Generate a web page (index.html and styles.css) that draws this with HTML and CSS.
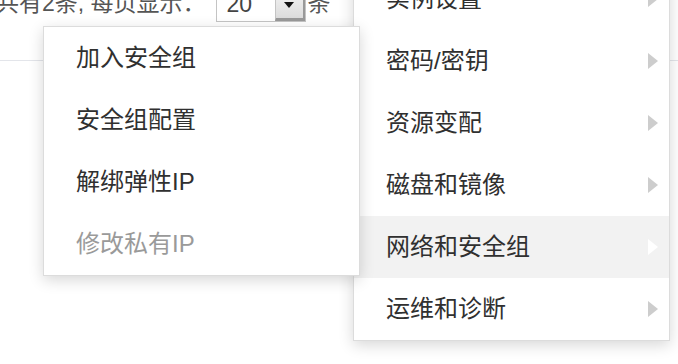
FILE: index.html
```html
<!DOCTYPE html>
<html>

<head>
    <meta charset="utf-8">
    <title>实例操作</title>
    <link rel="stylesheet" href="styles.css">
</head>

<body>
    <div class="pager">
        <span class="pager-text">共有2条, 每页显示：</span>
        <div class="fake-select">
            <span class="fake-select-value">20</span>
            <span class="fake-select-btn"><i class="caret-down"></i></span>
        </div>
        <span class="pager-text">条</span>
    </div>

    <ul class="menu menu-main">
        <li class="menu-item has-sub">实例设置<i class="arrow"></i></li>
        <li class="menu-item has-sub">密码/密钥<i class="arrow"></i></li>
        <li class="menu-item has-sub">资源变配<i class="arrow"></i></li>
        <li class="menu-item has-sub">磁盘和镜像<i class="arrow"></i></li>
        <li class="menu-item has-sub active">网络和安全组<i class="arrow"></i></li>
        <li class="menu-item has-sub">运维和诊断<i class="arrow"></i></li>
    </ul>

    <ul class="menu menu-sub">
        <li class="menu-item">加入安全组</li>
        <li class="menu-item">安全组配置</li>
        <li class="menu-item">解绑弹性IP</li>
        <li class="menu-item disabled">修改私有IP</li>
    </ul>
</body>

</html>
```

FILE: styles.css
```css
html,
body {
    margin: 0;
    padding: 0;
    background: #fff;
    overflow: hidden;
}

body {
    height: 364px;
    position: relative;
    font-family: "Liberation Sans", "Noto Sans CJK SC", sans-serif;
    color: #333;
}

.pager {
    display: flex;
    align-items: flex-start;
    height: 73px;
    margin-top: -12px;
    margin-left: -4px;
    border-bottom: 1px solid #e3e5ea;
    box-sizing: border-box;
    font-size: 23px;
    color: #555;
}

.pager-text {
    line-height: 30px;
}

.fake-select {
    display: flex;
    width: 90px;
    height: 35px;
    margin: -1px 2px 0 10px;
    border: 1px solid #c4c4c4;
    box-sizing: border-box;
    background: #fff;
}

.fake-select-value {
    flex: 1;
    padding-left: 10px;
    line-height: 32px;
    font-size: 23px;
    color: #444;
}

.fake-select-btn {
    display: flex;
    justify-content: center;
    width: 30px;
    box-sizing: border-box;
    border-left: 1px solid #c4c4c4;
    border-right: 2px solid #999;
    border-bottom: 3px solid #999;
    background: linear-gradient(#f5f5f5, #dcdcdc);
}

.caret-down {
    margin-top: 14px;
    width: 0;
    height: 0;
    border-top: 6px solid #111;
    border-left: 5px solid transparent;
    border-right: 5px solid transparent;
}

.menu {
    position: absolute;
    margin: 0;
    padding: 0;
    list-style: none;
    width: 317px;
    background: #fff;
    border: 1px solid #dcdcdc;
    box-sizing: border-box;
    box-shadow: 0 4px 14px rgba(0, 0, 0, 0.16);
}

.menu-main {
    left: 353px;
    top: -33px;
}

.menu-sub {
    left: 43px;
    top: 26px;
}

.menu-item {
    position: relative;
    height: 62px;
    line-height: 62px;
    padding-left: 32px;
    font-size: 24px;
    color: #303030;
}

.menu-item.active {
    background: #f2f2f2;
}

.menu-item.disabled {
    color: #9a9a9a;
}

.arrow {
    position: absolute;
    right: 11px;
    top: 23px;
    width: 0;
    height: 0;
    border-left: 10px solid #cdcdcd;
    border-top: 8px solid transparent;
    border-bottom: 8px solid transparent;
}

.active .arrow {
    border-left-color: #fff;
}
```
